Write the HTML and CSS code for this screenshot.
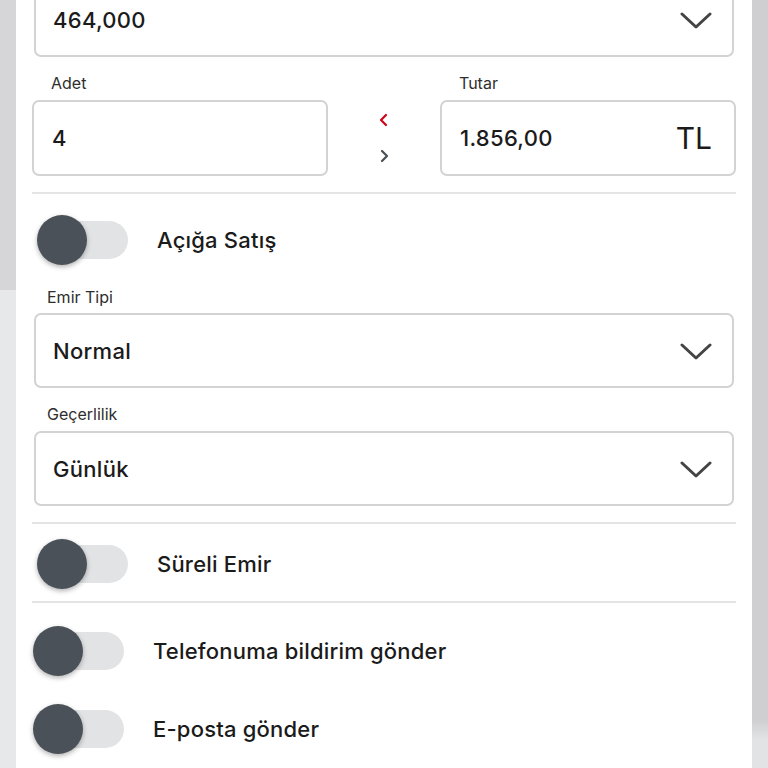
FILE: index.html
```html
<!DOCTYPE html>
<html lang="tr">
<head>
<meta charset="UTF-8" />
<meta name="viewport" content="width=device-width, initial-scale=1.0" />
<title>Emir</title>
<link rel="stylesheet" href="styles.css">
</head>
<body>
<div id="page">
<div id="side-left"></div>
<div id="card">

<div class="select first">
<span class="value">464,000</span>
<svg class="chev" width="32" height="18" viewBox="0 0 32 18"><path d="M2 2 L16 15 L30 2" fill="none" stroke="#444" stroke-width="3" stroke-linecap="round" stroke-linejoin="round"/></svg>
</div>

<div class="pair">
<div class="field">
<div class="label">Adet</div>
<div class="box"><span class="value">4</span></div>
</div>
<div class="arrows">
<svg width="12" height="14" viewBox="0 0 12 14"><path d="M8 2 L3 7 L8 12" fill="none" stroke="#d0021b" stroke-width="2.2" stroke-linecap="round" stroke-linejoin="round"/></svg>
<svg width="12" height="14" viewBox="0 0 12 14"><path d="M4 2 L9 7 L4 12" fill="none" stroke="#4a4f55" stroke-width="2.2" stroke-linecap="round" stroke-linejoin="round"/></svg>
</div>
<div class="field">
<div class="label">Tutar</div>
<div class="box"><span class="value">1.856,00</span><span class="unit">TL</span></div>
</div>
</div>

<div class="divider"></div>

<div class="toggle-row t1">
<div class="toggle"><div class="knob"></div></div>
<span class="toggle-label">Açığa Satış</span>
</div>

<div class="label sel-label l1">Emir Tipi</div>
<div class="select s1">
<span class="value">Normal</span>
<svg class="chev" width="32" height="18" viewBox="0 0 32 18"><path d="M2 2 L16 15 L30 2" fill="none" stroke="#444" stroke-width="3" stroke-linecap="round" stroke-linejoin="round"/></svg>
</div>

<div class="label sel-label l2">Geçerlilik</div>
<div class="select s2">
<span class="value">Günlük</span>
<svg class="chev" width="32" height="18" viewBox="0 0 32 18"><path d="M2 2 L16 15 L30 2" fill="none" stroke="#444" stroke-width="3" stroke-linecap="round" stroke-linejoin="round"/></svg>
</div>

<div class="divider d2"></div>

<div class="toggle-row t2">
<div class="toggle"><div class="knob"></div></div>
<span class="toggle-label">Süreli Emir</span>
</div>

<div class="divider d3"></div>

<div class="toggle-row t3 shifted">
<div class="toggle"><div class="knob"></div></div>
<span class="toggle-label">Telefonuma bildirim gönder</span>
</div>

<div class="toggle-row t4 shifted">
<div class="toggle"><div class="knob"></div></div>
<span class="toggle-label">E-posta gönder</span>
</div>

</div>
<div id="side-right"></div>
</div>
</body>
</html>
```

FILE: styles.css
```css
body {
margin: 0;
font-family: Inter, "Open Sans", sans-serif;
color: #1b1b1b;
background: #e6e7e9;
overflow: hidden;
}

#page {
display: flex;
height: 768px;
}

#side-left {
width: 16px;
background: linear-gradient(to bottom, #d6d6d8 0, #d6d6d8 290px, #e7e8ea 290px);
}

#side-right {
width: 16px;
background: linear-gradient(to bottom, #cfcfd1 0, #cfcfd1 720px, #e2e3e5 740px);
}

#card {
flex: 1;
background: #ffffff;
padding: 0 16px;
display: flex;
flex-direction: column;
}

.select {
height: 75px;
margin: 0 2px;
box-sizing: border-box;
border: 2px solid #d3d3d3;
border-radius: 7px;
display: flex;
align-items: center;
justify-content: space-between;
padding: 0 20px 0 17px;
}

.select.first {
margin-top: -18px;
flex-shrink: 0;
}

.value {
font-size: 22px;
font-weight: 500;
letter-spacing: 0.3px;
color: #1b1b1b;
}

.chev {
margin-top: 2px;
}

.label {
font-size: 16px;
line-height: 20px;
color: #2e2e2e;
}

.pair {
display: grid;
grid-template-columns: 296px 1fr 296px;
margin-top: 16px;
}

.field .label {
padding-left: 19px;
}

.box {
margin-top: 7px;
height: 76px;
box-sizing: border-box;
border: 2px solid #d3d3d3;
border-radius: 7px;
display: flex;
align-items: center;
justify-content: space-between;
padding: 0 22px 0 18px;
}

.unit {
font-size: 30px;
color: #1b1b1b;
}

.arrows {
display: flex;
flex-direction: column;
align-items: center;
justify-content: flex-end;
gap: 22px;
padding-bottom: 13px;
}

.divider {
height: 2px;
background: #e4e4e4;
margin-top: 16px;
flex-shrink: 0;
}

.toggle-row {
display: flex;
align-items: center;
height: 50px;
flex-shrink: 0;
}

.toggle {
position: relative;
width: 90px;
height: 38px;
margin-left: 6px;
}

.toggle::before {
content: "";
position: absolute;
left: 6px;
right: 0;
top: 0;
bottom: 0;
background: #e2e3e5;
border-radius: 19px;
}

.knob {
position: absolute;
left: -1px;
top: -6px;
width: 50px;
height: 50px;
border-radius: 50%;
background: #4a5158;
box-shadow: 0 2px 5px rgba(0, 0, 0, 0.3);
}

.toggle-label {
font-size: 22px;
font-weight: 500;
letter-spacing: 0.2px;
margin-left: 29px;
}

.shifted .toggle {
margin-left: 2px;
}

.t1 { margin-top: 21px; }
.l1 { margin-top: 22px; padding-left: 15px; }
.s1 { margin-top: 6px; }
.l2 { margin-top: 16px; padding-left: 15px; }
.s2 { margin-top: 7px; }
.t2 { margin-top: 15px; }
.d3 { margin-top: 12px; }
.t3 { margin-top: 23px; }
.t4 { margin-top: 28px; }
```
